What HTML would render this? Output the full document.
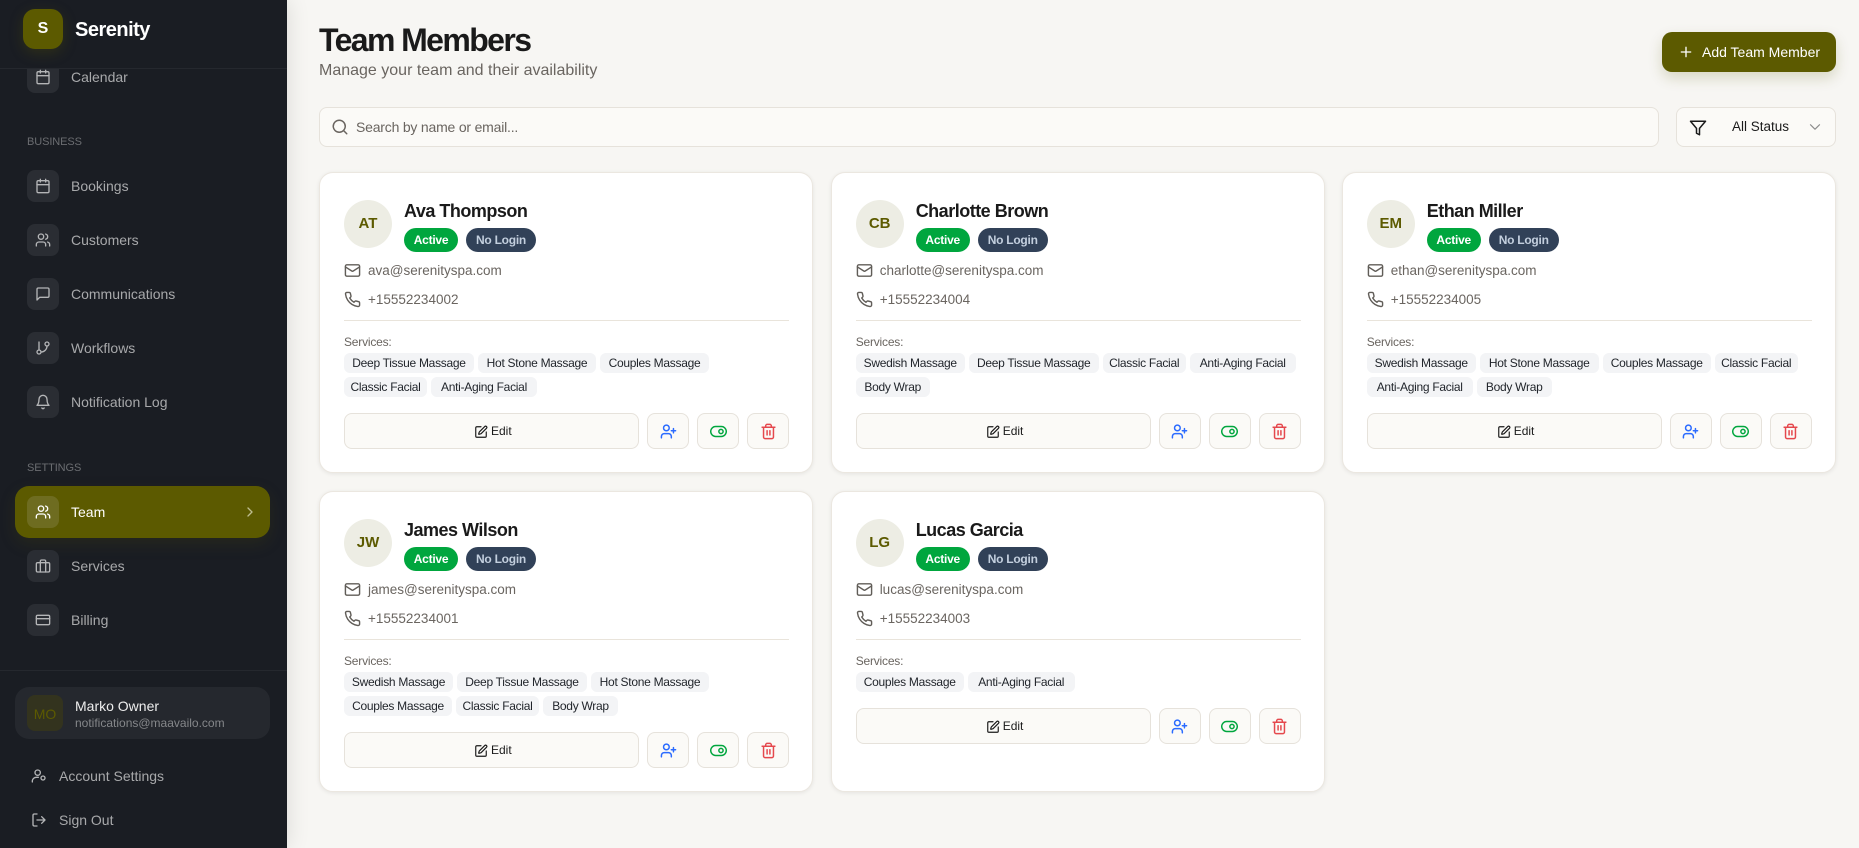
<!DOCTYPE html>
<html lang="en"><head><meta charset="utf-8"><title>Team Members</title>
<style>
*{box-sizing:border-box;margin:0;padding:0}
html,body{width:1859px;height:848px;overflow:hidden;background:#f7f6f3;font-family:"Liberation Sans",sans-serif;color:#1a1a1a}
svg{display:block;fill:none;stroke:currentColor;stroke-width:2;stroke-linecap:round;stroke-linejoin:round}
.side{position:absolute;left:0;top:0;width:287px;height:848px;background:#1a1d23;box-shadow:0 0 22px rgba(0,0,0,.12);overflow:hidden}
.head{position:absolute;left:0;top:0;width:287px;height:69px;background:#1a1d23;border-bottom:1px solid #25282e;z-index:2}
.logo{position:absolute;left:23px;top:9px;width:40px;height:40px;border-radius:12px;background:#5c5a00;color:#fff;font-weight:700;font-size:16px;line-height:40px;text-align:center;box-shadow:0 4px 14px rgba(92,90,0,.3)}
.brand{position:absolute;left:75px;top:18px;font-size:20px;font-weight:700;color:#fff;line-height:24px;letter-spacing:-.5px}
.nav{position:absolute;left:27px;height:32px;width:230px;display:flex;align-items:center;color:#a8a9ab;font-size:14px}
.ib{width:32px;height:32px;border-radius:8px;background:#2a2d33;display:flex;align-items:center;justify-content:center;margin-right:12px;color:#b4b5b7;flex:none}
.sec{position:absolute;left:27px;font-size:11px;letter-spacing:-.1px;color:#6b6d71;line-height:14px}
.act{position:absolute;left:15px;top:486px;width:255px;height:52px;border-radius:14px;background:#5c5a00;box-shadow:0 6px 16px rgba(92,90,0,.18)}
.act .ib{position:absolute;left:12px;top:10px;background:#6e6c20;color:#fff}
.act span{position:absolute;left:56px;top:17px;color:#fff;font-size:14px;line-height:18px}
.act svg.c{position:absolute;right:12px;top:18px;color:#bdbc8e}
.dv{position:absolute;left:0;top:670px;width:287px;height:1px;background:#25282e}
.user{position:absolute;left:15px;top:687px;width:255px;height:52px;border-radius:14px;background:#25282e}
.av{position:absolute;left:12px;top:8px;width:36px;height:36px;border-radius:8px;background:#33331e;color:#5c5a00;font-size:14px;line-height:38px;text-align:center}
.un{position:absolute;left:60px;top:10px;font-size:14px;color:#ededed;line-height:18px}
.um{position:absolute;left:60px;top:29px;font-size:12px;color:#85878a;line-height:15px}
.lk{position:absolute;left:31px;display:flex;align-items:center;color:#a8a9ab;font-size:14px;height:18px}
.lk svg{margin-right:12px;color:#b4b5b7}
h1{position:absolute;left:319px;top:21px;font-size:32px;line-height:38px;font-weight:700;color:#1a1a1a;letter-spacing:-1.6px}
.subt{position:absolute;left:319px;top:60px;font-size:16px;line-height:22px;color:#6a6560}
.add{position:absolute;left:1662px;top:32px;width:174px;height:40px;border-radius:10px;background:#5c5a00;color:#fff;font-size:14px;box-shadow:0 6px 14px rgba(92,90,0,.2)}
.add svg{position:absolute;left:16px;top:12px}
.add span{position:absolute;left:40px;top:11px;line-height:18px}
.search{position:absolute;left:319px;top:107px;width:1340px;height:40px;border:1px solid #e6e2db;border-radius:8px;background:#fbfaf7;color:#6a6560;font-size:14px}
.search svg{position:absolute;left:11px;top:10px}
.search span{position:absolute;left:36px;top:10px;line-height:18px;letter-spacing:-.2px}
.filter{position:absolute;left:1676px;top:107px;width:160px;height:40px;border:1px solid #e6e2db;border-radius:8px;background:#fbfaf7;font-size:13.5px;color:#1a1a1a}
.filter svg.f{position:absolute;left:12px;top:11px}
.filter span{position:absolute;left:55px;top:10px;line-height:18px}
.filter svg.d{position:absolute;left:129px;top:10px;color:#8a8a8a;stroke-width:1.6}
.card{position:absolute;width:494px;height:301px;background:#fff;border:1px solid #ebe7e0;border-radius:14px;box-shadow:0 1px 4px rgba(0,0,0,.08)}
.ca{position:absolute;left:24px;top:27px;width:48px;height:48px;border-radius:50%;background:#edede4;color:#5c5a00;font-weight:700;font-size:15px;line-height:48px;text-align:center}
.cn{position:absolute;left:84px;top:27px;font-size:18px;line-height:22px;font-weight:700;color:#1a1a1a;letter-spacing:-.5px}
.bd{position:absolute;top:55px;height:24px;border-radius:12px;font-size:12px;font-weight:700;line-height:24px;text-align:center;letter-spacing:-.25px}
.b1{left:84px;width:54px;background:#00a63e;color:#fff}
.b2{left:146px;width:70px;background:#314158;color:#c3cfde}
.ct{position:absolute;left:24px;display:flex;align-items:center;height:18px;font-size:13.5px;color:#6a6560}
.ct svg{margin-right:7px;flex:none;color:#615d58}
.hr{position:absolute;left:24px;top:147px;width:445px;height:1px;background:#e9e4db}
.sl{position:absolute;left:24px;top:162px;font-size:12px;line-height:15px;color:#6a6560;letter-spacing:-.2px}
.tr{position:absolute;left:24px;display:flex;gap:4px}
.tg{height:20px;border-radius:6px;background:#f3f4f6;font-size:12px;line-height:20px;text-align:center;color:#1f2329;white-space:nowrap;letter-spacing:-.28px}
.ed,.ic{position:absolute;height:36px;border:1px solid #e6e2db;border-radius:8px;background:#fbfaf7}
.ed{left:24px;width:295px;font-size:12px;color:#1a1a1a}
.ed svg{position:absolute;left:129px;top:11px}
.ed span{position:absolute;left:146px;top:10px;line-height:15px}
.ic{width:42px;display:flex;align-items:center;justify-content:center}
.ic svg{stroke-width:2.1}
.i1{left:327px;color:#2b6bff}.i2{left:377px;color:#00a63e}.i3{left:427px;color:#e5484d}
.c2{left:830.7px}.c3{left:1341.7px}
</style></head><body>
<svg width="0" height="0" style="position:absolute">
<defs>
<symbol id="cal" viewBox="0 0 24 24"><path d="M8 2v4M16 2v4"/><rect x="3" y="4" width="18" height="18" rx="2"/><path d="M3 10h18"/></symbol>
<symbol id="users" viewBox="0 0 24 24"><path d="M16 21v-2a4 4 0 0 0-4-4H6a4 4 0 0 0-4 4v2"/><circle cx="9" cy="7" r="4"/><path d="M22 21v-2a4 4 0 0 0-3-3.87M16 3.13a4 4 0 0 1 0 7.75"/></symbol>
<symbol id="msg" viewBox="0 0 24 24"><path d="M21 15a2 2 0 0 1-2 2H7l-4 4V5a2 2 0 0 1 2-2h14a2 2 0 0 1 2 2z"/></symbol>
<symbol id="git" viewBox="0 0 24 24"><path d="M6 3v12"/><circle cx="18" cy="6" r="3"/><circle cx="6" cy="18" r="3"/><path d="M18 9a9 9 0 0 1-9 9"/></symbol>
<symbol id="bell" viewBox="0 0 24 24"><path d="M6 8a6 6 0 0 1 12 0c0 7 3 9 3 9H3s3-2 3-9M10.3 21a1.94 1.94 0 0 0 3.4 0"/></symbol>
<symbol id="brief" viewBox="0 0 24 24"><rect x="2" y="7" width="20" height="14" rx="2"/><path d="M16 21V5a2 2 0 0 0-2-2h-4a2 2 0 0 0-2 2v16"/></symbol>
<symbol id="cardi" viewBox="0 0 24 24"><rect x="2" y="5" width="20" height="14" rx="2"/><path d="M2 10h20"/></symbol>
<symbol id="ucog" viewBox="0 0 24 24"><circle cx="10" cy="7" r="4"/><path d="M2 21v-2a6 6 0 0 1 6-5h3"/><circle cx="18" cy="15" r="3"/></symbol>
<symbol id="out" viewBox="0 0 24 24"><path d="M9 21H5a2 2 0 0 1-2-2V5a2 2 0 0 1 2-2h4M16 17l5-5-5-5M21 12H9"/></symbol>
<symbol id="search" viewBox="0 0 24 24"><circle cx="11" cy="11" r="8"/><path d="m21 21-4.3-4.3"/></symbol>
<symbol id="filter" viewBox="0 0 24 24"><path d="M22 3H2l8 9.46V19l4 2v-8.54z"/></symbol>
<symbol id="down" viewBox="0 0 24 24"><path d="m6 9 6 6 6-6"/></symbol>
<symbol id="right" viewBox="0 0 24 24"><path d="m9 18 6-6-6-6"/></symbol>
<symbol id="plus" viewBox="0 0 24 24"><path d="M5 12h14M12 5v14"/></symbol>
<symbol id="mail" viewBox="0 0 24 24"><rect x="2" y="4" width="20" height="16" rx="2"/><path d="m22 7-8.97 5.7a1.94 1.94 0 0 1-2.06 0L2 7"/></symbol>
<symbol id="phone" viewBox="0 0 24 24"><path d="M22 16.92v3a2 2 0 0 1-2.18 2 19.79 19.79 0 0 1-8.63-3.07 19.5 19.5 0 0 1-6-6 19.79 19.79 0 0 1-3.07-8.67A2 2 0 0 1 4.11 2h3a2 2 0 0 1 2 1.72 12.84 12.84 0 0 0 .7 2.81 2 2 0 0 1-.45 2.11L8.09 9.91a16 16 0 0 0 6 6l1.27-1.27a2 2 0 0 1 2.11-.45 12.84 12.84 0 0 0 2.81.7A2 2 0 0 1 22 16.92z"/></symbol>
<symbol id="pen" viewBox="0 0 24 24"><path d="M12 3H5a2 2 0 0 0-2 2v14a2 2 0 0 0 2 2h14a2 2 0 0 0 2-2v-7"/><path d="M18.375 2.625a1 1 0 0 1 3 3l-9.013 9.014a2 2 0 0 1-.853.505l-2.873.84a.5.5 0 0 1-.62-.62l.84-2.873a2 2 0 0 1 .506-.852z"/></symbol>
<symbol id="uplus" viewBox="0 0 24 24"><path d="M16 21v-2a4 4 0 0 0-4-4H6a4 4 0 0 0-4 4v2"/><circle cx="9" cy="7" r="4"/><path d="M19 8v6M22 11h-6"/></symbol>
<symbol id="tog" viewBox="0 0 24 24"><rect x="1" y="5" width="22" height="14" rx="7"/><circle cx="15.5" cy="12" r="3"/></symbol>
<symbol id="trash" viewBox="0 0 24 24"><path d="M3 6h18M19 6v14c0 1-1 2-2 2H7c-1 0-2-1-2-2V6M8 6V4c0-1 1-2 2-2h4c1 0 2 1 2 2v2M10 11v6M14 11v6"/></symbol>
</defs></svg>

<div class="side">
<div class="head"><div class="logo">S</div><div class="brand">Serenity</div></div>
<div class="nav" style="top:61px"><div class="ib"><svg width="16" height="16"><use href="#cal"/></svg></div>Calendar</div>
<div class="sec" style="top:135px">BUSINESS</div>
<div class="nav" style="top:170px"><div class="ib"><svg width="16" height="16"><use href="#cal"/></svg></div>Bookings</div>
<div class="nav" style="top:224px"><div class="ib"><svg width="16" height="16"><use href="#users"/></svg></div>Customers</div>
<div class="nav" style="top:278px"><div class="ib"><svg width="16" height="16"><use href="#msg"/></svg></div>Communications</div>
<div class="nav" style="top:332px"><div class="ib"><svg width="16" height="16"><use href="#git"/></svg></div>Workflows</div>
<div class="nav" style="top:386px"><div class="ib"><svg width="16" height="16"><use href="#bell"/></svg></div>Notification Log</div>
<div class="sec" style="top:461px">SETTINGS</div>
<div class="act"><div class="ib"><svg width="16" height="16"><use href="#users"/></svg></div><span>Team</span><svg class="c" width="16" height="16"><use href="#right"/></svg></div>
<div class="nav" style="top:550px"><div class="ib"><svg width="16" height="16"><use href="#brief"/></svg></div>Services</div>
<div class="nav" style="top:604px"><div class="ib"><svg width="16" height="16"><use href="#cardi"/></svg></div>Billing</div>
<div class="dv"></div>
<div class="user"><div class="av">MO</div><div class="un">Marko Owner</div><div class="um">notifications@maavailo.com</div></div>
<div class="lk" style="top:767px"><svg width="16" height="16"><use href="#ucog"/></svg>Account Settings</div>
<div class="lk" style="top:811px"><svg width="16" height="16"><use href="#out"/></svg>Sign Out</div>
</div>

<h1>Team Members</h1>
<div class="subt">Manage your team and their availability</div>
<div class="add"><svg width="16" height="16"><use href="#plus"/></svg><span>Add Team Member</span></div>
<div class="search"><svg width="18" height="18"><use href="#search"/></svg><span>Search by name or email...</span></div>
<div class="filter"><svg class="f" width="18" height="18" style="color:#1a1a1a"><use href="#filter"/></svg><span>All Status</span><svg class="d" width="18" height="18"><use href="#down"/></svg></div>

<div class="card" style="left:319px;top:172px">
<div class="ca">AT</div><div class="cn">Ava Thompson</div><div class="bd b1">Active</div><div class="bd b2">No Login</div>
<div class="ct" style="top:88px"><svg width="17" height="17"><use href="#mail"/></svg>ava@serenityspa.com</div>
<div class="ct" style="top:117px"><svg width="17" height="17"><use href="#phone"/></svg>+15552234002</div>
<div class="hr"></div><div class="sl">Services:</div>
<div class="tr" style="top:180px"><div class="tg" style="width:130px">Deep Tissue Massage</div><div class="tg" style="width:118px">Hot Stone Massage</div><div class="tg" style="width:109px">Couples Massage</div></div>
<div class="tr" style="top:204px"><div class="tg" style="width:83px">Classic Facial</div><div class="tg" style="width:106px">Anti-Aging Facial</div></div>
<div class="ed" style="top:240px"><svg width="14" height="14"><use href="#pen"/></svg><span>Edit</span></div>
<div class="ic i1" style="top:240px"><svg width="17" height="17"><use href="#uplus"/></svg></div><div class="ic i2" style="top:240px"><svg width="17" height="17"><use href="#tog"/></svg></div><div class="ic i3" style="top:240px"><svg width="17" height="17"><use href="#trash"/></svg></div>
</div>

<div class="card c2" style="top:172px">
<div class="ca">CB</div><div class="cn">Charlotte Brown</div><div class="bd b1">Active</div><div class="bd b2">No Login</div>
<div class="ct" style="top:88px"><svg width="17" height="17"><use href="#mail"/></svg>charlotte@serenityspa.com</div>
<div class="ct" style="top:117px"><svg width="17" height="17"><use href="#phone"/></svg>+15552234004</div>
<div class="hr"></div><div class="sl">Services:</div>
<div class="tr" style="top:180px"><div class="tg" style="width:109px">Swedish Massage</div><div class="tg" style="width:130px">Deep Tissue Massage</div><div class="tg" style="width:83px">Classic Facial</div><div class="tg" style="width:106px">Anti-Aging Facial</div></div>
<div class="tr" style="top:204px"><div class="tg" style="width:74px">Body Wrap</div></div>
<div class="ed" style="top:240px"><svg width="14" height="14"><use href="#pen"/></svg><span>Edit</span></div>
<div class="ic i1" style="top:240px"><svg width="17" height="17"><use href="#uplus"/></svg></div><div class="ic i2" style="top:240px"><svg width="17" height="17"><use href="#tog"/></svg></div><div class="ic i3" style="top:240px"><svg width="17" height="17"><use href="#trash"/></svg></div>
</div>

<div class="card c3" style="top:172px">
<div class="ca">EM</div><div class="cn">Ethan Miller</div><div class="bd b1">Active</div><div class="bd b2">No Login</div>
<div class="ct" style="top:88px"><svg width="17" height="17"><use href="#mail"/></svg>ethan@serenityspa.com</div>
<div class="ct" style="top:117px"><svg width="17" height="17"><use href="#phone"/></svg>+15552234005</div>
<div class="hr"></div><div class="sl">Services:</div>
<div class="tr" style="top:180px"><div class="tg" style="width:109px">Swedish Massage</div><div class="tg" style="width:119px">Hot Stone Massage</div><div class="tg" style="width:108px">Couples Massage</div><div class="tg" style="width:83px">Classic Facial</div></div>
<div class="tr" style="top:204px"><div class="tg" style="width:106px">Anti-Aging Facial</div><div class="tg" style="width:75px">Body Wrap</div></div>
<div class="ed" style="top:240px"><svg width="14" height="14"><use href="#pen"/></svg><span>Edit</span></div>
<div class="ic i1" style="top:240px"><svg width="17" height="17"><use href="#uplus"/></svg></div><div class="ic i2" style="top:240px"><svg width="17" height="17"><use href="#tog"/></svg></div><div class="ic i3" style="top:240px"><svg width="17" height="17"><use href="#trash"/></svg></div>
</div>

<div class="card" style="left:319px;top:491px">
<div class="ca">JW</div><div class="cn">James Wilson</div><div class="bd b1">Active</div><div class="bd b2">No Login</div>
<div class="ct" style="top:88px"><svg width="17" height="17"><use href="#mail"/></svg>james@serenityspa.com</div>
<div class="ct" style="top:117px"><svg width="17" height="17"><use href="#phone"/></svg>+15552234001</div>
<div class="hr"></div><div class="sl">Services:</div>
<div class="tr" style="top:180px"><div class="tg" style="width:109px">Swedish Massage</div><div class="tg" style="width:130px">Deep Tissue Massage</div><div class="tg" style="width:118px">Hot Stone Massage</div></div>
<div class="tr" style="top:204px"><div class="tg" style="width:108px">Couples Massage</div><div class="tg" style="width:83px">Classic Facial</div><div class="tg" style="width:75px">Body Wrap</div></div>
<div class="ed" style="top:240px"><svg width="14" height="14"><use href="#pen"/></svg><span>Edit</span></div>
<div class="ic i1" style="top:240px"><svg width="17" height="17"><use href="#uplus"/></svg></div><div class="ic i2" style="top:240px"><svg width="17" height="17"><use href="#tog"/></svg></div><div class="ic i3" style="top:240px"><svg width="17" height="17"><use href="#trash"/></svg></div>
</div>

<div class="card c2" style="top:491px">
<div class="ca">LG</div><div class="cn">Lucas Garcia</div><div class="bd b1">Active</div><div class="bd b2">No Login</div>
<div class="ct" style="top:88px"><svg width="17" height="17"><use href="#mail"/></svg>lucas@serenityspa.com</div>
<div class="ct" style="top:117px"><svg width="17" height="17"><use href="#phone"/></svg>+15552234003</div>
<div class="hr"></div><div class="sl">Services:</div>
<div class="tr" style="top:180px"><div class="tg" style="width:108px">Couples Massage</div><div class="tg" style="width:107px">Anti-Aging Facial</div></div>
<div class="ed" style="top:216px"><svg width="14" height="14"><use href="#pen"/></svg><span>Edit</span></div>
<div class="ic i1" style="top:216px"><svg width="17" height="17"><use href="#uplus"/></svg></div><div class="ic i2" style="top:216px"><svg width="17" height="17"><use href="#tog"/></svg></div><div class="ic i3" style="top:216px"><svg width="17" height="17"><use href="#trash"/></svg></div>
</div>
</body></html>
